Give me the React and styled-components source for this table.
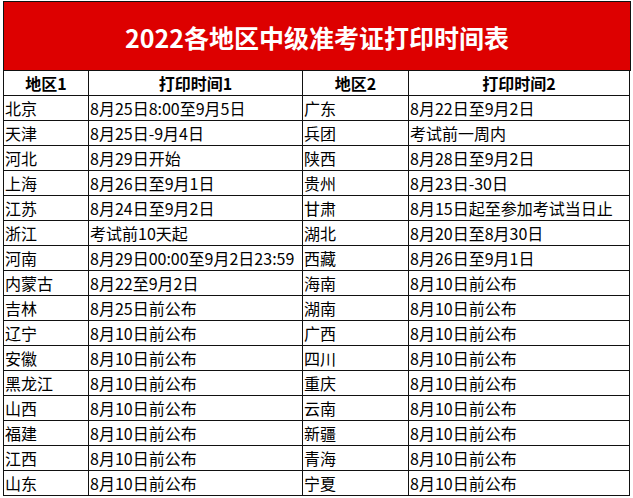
import React from "react";
import styled, { createGlobalStyle } from "styled-components";

const GlobalStyle = createGlobalStyle`
    html, body {
        margin: 0;
        padding: 0;
        background: #fff;
    }
    body {
        font-family: "Noto Sans CJK SC", "Noto Sans", sans-serif;
        color: #000;
    }
`;

const rows = [
    ["北京", "8月25日8:00至9月5日", "广东", "8月22日至9月2日"],
    ["天津", "8月25日-9月4日", "兵团", "考试前一周内"],
    ["河北", "8月29日开始", "陕西", "8月28日至9月2日"],
    ["上海", "8月26日至9月1日", "贵州", "8月23日-30日"],
    ["江苏", "8月24日至9月2日", "甘肃", "8月15日起至参加考试当日止"],
    ["浙江", "考试前10天起", "湖北", "8月20日至8月30日"],
    ["河南", "8月29日00:00至9月2日23:59", "西藏", "8月26日至9月1日"],
    ["内蒙古", "8月22至9月2日", "海南", "8月10日前公布"],
    ["吉林", "8月25日前公布", "湖南", "8月10日前公布"],
    ["辽宁", "8月10日前公布", "广西", "8月10日前公布"],
    ["安徽", "8月10日前公布", "四川", "8月10日前公布"],
    ["黑龙江", "8月10日前公布", "重庆", "8月10日前公布"],
    ["山西", "8月10日前公布", "云南", "8月10日前公布"],
    ["福建", "8月10日前公布", "新疆", "8月10日前公布"],
    ["江西", "8月10日前公布", "青海", "8月10日前公布"],
    ["山东", "8月10日前公布", "宁夏", "8月10日前公布"],
];

const heads = ["地区1", "打印时间1", "地区2", "打印时间2"];

const Sheet = styled.div`
    margin: 1px 0 0 3px;
    width: 627px;
    border-top: 1px solid #111;
    border-left: 1px solid #111;
`;

const Title = styled.div`
    height: 68px;
    background: #dd0000;
    border-right: 1px solid #111;
    border-bottom: 1px solid #111;
    display: flex;
    align-items: center;
    justify-content: center;
    color: #fff;
    font-size: 25px;
    font-weight: 700;
    padding-top: 2px;
    box-sizing: border-box;
    height: 69px;
`;

const Grid = styled.div`
    display: grid;
    grid-template-columns: 85px 214px 106px 221px;
    grid-auto-rows: 25px;
`;

const Cell = styled.div`
    box-sizing: border-box;
    border-right: 1px solid #111;
    border-bottom: 1px solid #111;
    display: flex;
    align-items: center;
    justify-content: ${props => props.head ? "center" : "flex-start"};
    padding: 0 0 0 ${props => props.head ? "0" : "1px"};
    font-size: 16px;
    font-weight: ${props => props.head ? 700 : 400};
    white-space: nowrap;
    overflow: hidden;
    line-height: 1;
`;

export default function App() {
    return (
        <>
            <GlobalStyle />
            <Sheet>
                <Title>2022各地区中级准考证打印时间表</Title>
                <Grid>
                    {heads.map(h => <Cell head key={h}>{h}</Cell>)}
                    {rows.map((r, i) => r.map((c, j) => <Cell key={i + "-" + j}>{c}</Cell>))}
                </Grid>
            </Sheet>
        </>
    );
}
